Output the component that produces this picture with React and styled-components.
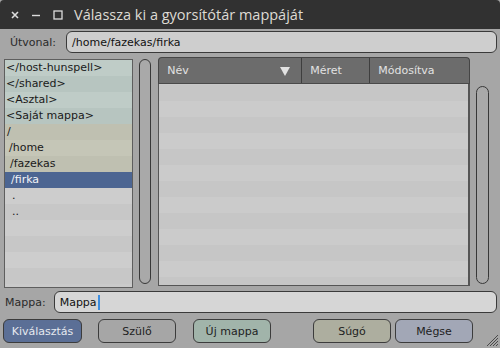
import styled, { createGlobalStyle } from 'styled-components';

const GlobalStyle = createGlobalStyle`
  html, body {
    margin: 0;
    padding: 0;
    background: #a6a6a6;
  }
  * {
    box-sizing: border-box;
  }
`;

const bookmarks = ['</host-hunspell>', '</shared>', '<Asztal>', '<Saját mappa>'];
const paths = [
  { name: '/', indent: 1 },
  { name: '/home', indent: 3 },
  { name: '/fazekas', indent: 4 },
  { name: '/firka', indent: 5, selected: true },
];
const dots = ['.', '..'];

const App = () => {
  return (
    <Window>
      <GlobalStyle />
      <TitleBar>
        <WindowControls>
          <svg width="8" height="8" viewBox="0 0 8 8">
            <path d="M1 1 L7 7 M7 1 L1 7" stroke="#dcdcdc" strokeWidth="1.6" />
          </svg>
          <svg width="8" height="8" viewBox="0 0 8 8">
            <path d="M0 4.5 H8" stroke="#dcdcdc" strokeWidth="1.4" />
          </svg>
          <svg width="10" height="10" viewBox="0 0 10 10">
            <rect x="1" y="1" width="8" height="8" fill="none" stroke="#dcdcdc" strokeWidth="1.3" />
          </svg>
        </WindowControls>
        <Title>Válassza ki a gyorsítótár mappáját</Title>
      </TitleBar>

      <PathRow>
        <Label>Útvonal:</Label>
        <PathField>/home/fazekas/firka</PathField>
      </PathRow>

      <Main>
        <DirList>
          {bookmarks.map((b, i) => (
            <ListRow key={b} $kind="bookmark" $odd={i % 2 === 1}>{b}</ListRow>
          ))}
          {paths.map((p, i) => (
            <ListRow
              key={p.name}
              $kind={p.selected ? 'selected' : 'path'}
              $odd={i % 2 === 1}
              $indent={p.indent}
            >
              {p.name}
            </ListRow>
          ))}
          {dots.map((d, i) => (
            <ListRow key={d} $kind="plain" $odd={i % 2 === 1} $indent={6}>{d}</ListRow>
          ))}
          {[0, 1, 2, 3].map(i => (
            <ListRow key={'e' + i} $kind="plain" $odd={i % 2 === 1} />
          ))}
        </DirList>

        <ScrollTrack $top={2} $bottom={4} />

        <FileTable>
          <TableHeader>
            <HeaderCell $width={143}>
              Név
              <SortArrow>
                <svg width="10" height="10" viewBox="0 0 10 10">
                  <path d="M0 1 H10 L5 10 Z" fill="#e2e2e2" />
                </svg>
              </SortArrow>
            </HeaderCell>
            <HeaderCell $width={68}>Méret</HeaderCell>
            <HeaderCell $last>Módosítva</HeaderCell>
          </TableHeader>
          <TableBody>
            {Array.from({ length: 13 }).map((_, i) => (
              <TableRow key={i} $odd={i % 2 === 1} />
            ))}
          </TableBody>
        </FileTable>

        <ScrollTrack $top={29} $bottom={4} />
      </Main>

      <FolderRow>
        <FolderLabel>Mappa:</FolderLabel>
        <FolderField>
          Mappa<Caret />
        </FolderField>
      </FolderRow>

      <ButtonRow>
        <Button $width={79} $bg="#5b6f96" $color="#e6e9ef">Kiválasztás</Button>
        <Button $width={78} $bg="#a6a6a6" $gap={16}>Szülő</Button>
        <Button $width={78} $bg="#a1b4aa" $gap={17}>Új mappa</Button>
        <Button $width={78} $bg="#adae9f" $gap={42}>Súgó</Button>
        <Button $width={78} $bg="#a2a7b6" $gap={4}>Mégse</Button>
        <Grip>
          <svg width="14" height="14" viewBox="0 0 14 14">
            <path d="M13 2 L2 13 M13 5 L5 13 M13 8 L8 13 M13 11 L11 13" stroke="#4a4a4a" strokeWidth="1" />
          </svg>
        </Grip>
      </ButtonRow>
    </Window>
  );
};

const Window = styled.div`
  width: 500px;
  height: 348px;
  overflow: hidden;
  background: #a6a6a6;
  font-family: "DejaVu Sans", Verdana, sans-serif;
  font-size: 11px;
  color: #1c1c1c;
  display: flex;
  flex-direction: column;
`;

const TitleBar = styled.div`
  height: 29px;
  flex: none;
  background: #313131;
  border-radius: 4px 4px 0 0;
  display: flex;
  align-items: center;
  padding-left: 11px;
`;

const WindowControls = styled.div`
  display: flex;
  align-items: center;
  gap: 13px;
  margin-right: 11px;

  svg {
    display: block;
  }
`;

const Title = styled.div`
  font-family: "Open Sans", "Noto Sans", sans-serif;
  font-size: 14.5px;
  color: #dedbd4;
  padding-bottom: 1px;
`;

const PathRow = styled.div`
  height: 28px;
  flex: none;
  display: flex;
  align-items: center;
  padding: 0 3px 2px 10px;
`;

const Label = styled.span`
  color: #2a2a2a;
  margin-right: 10px;
`;

const PathField = styled.div`
  flex: 1;
  height: 22px;
  background: #cecece;
  border: 1px solid #3a3a3a;
  border-radius: 6px;
  padding-left: 5px;
  display: flex;
  align-items: center;
  color: #111;
`;

const Main = styled.div`
  height: 231px;
  flex: none;
  display: flex;
  padding: 0 5px 0 4px;
`;

const DirList = styled.div`
  width: 131px;
  margin-top: 2px;
  border: 1px solid #5e5e5e;
  background: #cacaca;
  display: flex;
  flex-direction: column;
  overflow: hidden;
`;

const rowColors = {
  bookmark: ['#bfccc7', '#b7c5c0'],
  path: ['#bfc0b1', '#c5c6b7'],
  selected: ['#4c6592', '#4c6592'],
  plain: ['#cdcdcd', '#c7c7c7'],
};

const ListRow = styled.div`
  height: 16px;
  flex: none;
  line-height: 16px;
  padding-left: ${p => 1 + (p.$indent || 0)}px;
  white-space: nowrap;
  background: ${p => rowColors[p.$kind][p.$odd ? 1 : 0]};
  color: ${p => (p.$kind === 'selected' ? '#f2f4f8' : '#1a1a1a')};
`;

const ScrollTrack = styled.div`
  width: 13px;
  margin: ${p => p.$top}px 6px ${p => p.$bottom}px 6px;
  border: 1px solid #383838;
  border-radius: 7px;
  background: #a9a9a9;
`;

const FileTable = styled.div`
  width: 318px;
  height: 229px;
  margin-left: 1px;
  display: flex;
  flex-direction: column;
`;

const TableHeader = styled.div`
  height: 27px;
  flex: none;
  background: #6c6c6c;
  border: 1px solid #454545;
  border-bottom: 1px solid #4a4a4a;
  border-radius: 4px 4px 0 0;
  display: flex;
`;

const HeaderCell = styled.div`
  position: relative;
  width: ${p => (p.$width ? p.$width + 'px' : 'auto')};
  flex: ${p => (p.$last ? 1 : 'none')};
  border-right: ${p => (p.$last ? 'none' : '1px solid #3e3e3e')};
  color: #e2e2e2;
  display: flex;
  align-items: center;
  padding-left: 8px;
`;

const SortArrow = styled.span`
  position: absolute;
  right: 11px;
  top: 8px;

  svg {
    display: block;
  }
`;

const TableBody = styled.div`
  flex: 1;
  border: 1px solid #555;
  border-top: none;
  border-right: 2px solid #555;
  background: #c9c9c9;
  overflow: hidden;
  display: flex;
  flex-direction: column;
  padding-top: 1px;
`;

const TableRow = styled.div`
  height: 16px;
  flex: none;
  background: ${p => (p.$odd ? '#cbcbcb' : '#c6c6c6')};
`;

const FolderRow = styled.div`
  height: 26px;
  flex: none;
  display: flex;
  align-items: center;
  padding: 2px 3px 0 5px;
`;

const FolderLabel = styled.span`
  color: #2a2a2a;
  margin-right: 8px;
`;

const FolderField = styled.div`
  flex: 1;
  height: 22px;
  background: #d6d6d6;
  border: 1px solid #3a3a3a;
  border-radius: 6px;
  padding-left: 5px;
  display: flex;
  align-items: center;
  color: #111;
`;

const Caret = styled.span`
  display: inline-block;
  width: 2px;
  height: 15px;
  background: #3d8ee0;
  margin-left: 1px;
`;

const ButtonRow = styled.div`
  flex: 1;
  display: flex;
  align-items: flex-start;
  padding: 5px 0 0 3px;
  position: relative;
`;

const Button = styled.button`
  width: ${p => p.$width}px;
  height: 24px;
  margin-left: ${p => p.$gap || 0}px;
  background: ${p => p.$bg};
  color: ${p => p.$color || '#1e1e1e'};
  border: 1px solid #3c3c3c;
  border-radius: 6px;
  font-family: "DejaVu Sans", Verdana, sans-serif;
  font-size: 11px;
  padding: 0;
`;

const Grip = styled.div`
  position: absolute;
  right: 1px;
  bottom: 1px;

  svg {
    display: block;
  }
`;

export default App;
